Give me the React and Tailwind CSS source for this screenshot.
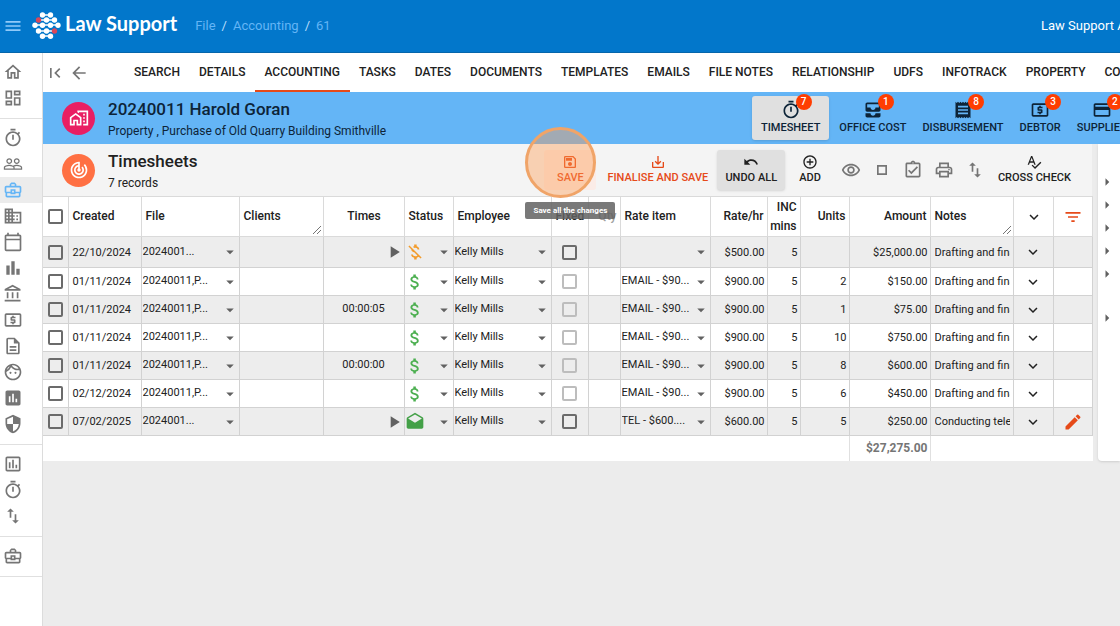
import {
  MdMenu,
  MdOutlineHome,
  MdOutlineDashboard,
  MdOutlineTimer,
  MdPeopleOutline,
  MdOutlineBusinessCenter,
  MdBusiness,
  MdOutlineCalendarToday,
  MdBarChart,
  MdOutlineAccountBalance,
  MdOutlineLocalAtm,
  MdOutlineDescription,
  MdOutlineFace,
  MdAssessment,
  MdSecurity,
  MdOutlineAssessment,
  MdSwapVert,
  MdFirstPage,
  MdArrowBack,
  MdOutlineHomeWork,
  MdTrackChanges,
  MdOutlineSave,
  MdSaveAlt,
  MdUndo,
  MdAddCircleOutline,
  MdOutlineRemoveRedEye,
  MdOutlineStop,
  MdOutlineAssignmentTurnedIn,
  MdOutlinePrint,
  MdSpellcheck,
  MdMoneyOff,
  MdAttachMoney,
  MdDrafts,
  MdFilterList,
  MdModeEdit,
  MdPlayArrow,
  MdArrowDropDown,
  MdArrowRight,
  MdExpandMore,
  MdAllInbox,
  MdReceipt,
  MdPayment,
} from "react-icons/md";

const sideGroups = [
  [
    { label: "Home", icon: MdOutlineHome },
    { label: "Dashboard", icon: MdOutlineDashboard },
  ],
  [
    { label: "Timer", icon: MdOutlineTimer },
    { label: "People", icon: MdPeopleOutline },
    { label: "Files", icon: MdOutlineBusinessCenter, active: true },
    { label: "Companies", icon: MdBusiness },
    { label: "Calendar", icon: MdOutlineCalendarToday },
    { label: "Charts", icon: MdBarChart },
    { label: "Trust account", icon: MdOutlineAccountBalance },
    { label: "Billing", icon: MdOutlineLocalAtm },
    { label: "Documents", icon: MdOutlineDescription },
    { label: "Employees", icon: MdOutlineFace },
    { label: "Reports", icon: MdAssessment },
    { label: "Security", icon: MdSecurity },
  ],
  [
    { label: "Report list", icon: MdOutlineAssessment },
    { label: "Timesheets", icon: MdOutlineTimer },
    { label: "Transfers", icon: MdSwapVert },
  ],
  [{ label: "Recent file", icon: MdOutlineBusinessCenter }],
];

const tabs = [
  "Search",
  "Details",
  "Accounting",
  "Tasks",
  "Dates",
  "Documents",
  "Templates",
  "Emails",
  "File notes",
  "Relationship",
  "UDFs",
  "Infotrack",
  "Property",
  "Costs",
];

const sections = [
  { label: "Timesheet", icon: MdOutlineTimer, count: 7, active: true },
  { label: "Office cost", icon: MdAllInbox, count: 1 },
  { label: "Disbursement", icon: MdReceipt, count: 8 },
  { label: "Debtor", icon: MdOutlineLocalAtm, count: 3 },
  { label: "Supplier", icon: MdPayment, count: 2 },
];

const rows = [
  { created: "22/10/2024", file: "2024001...", play: true, status: "off", editable: true, item: "", rate: "$500.00", units: "", amount: "$25,000.00", notes: "Drafting and finalising" },
  { created: "01/11/2024", file: "20240011,P...", status: "money", item: "EMAIL - $90...", rate: "$900.00", units: "2", amount: "$150.00", notes: "Drafting and finalising" },
  { created: "01/11/2024", file: "20240011,P...", time: "00:00:05", status: "money", item: "EMAIL - $90...", rate: "$900.00", units: "1", amount: "$75.00", notes: "Drafting and finalising" },
  { created: "01/11/2024", file: "20240011,P...", status: "money", item: "EMAIL - $90...", rate: "$900.00", units: "10", amount: "$750.00", notes: "Drafting and finalising" },
  { created: "01/11/2024", file: "20240011,P...", time: "00:00:00", status: "money", item: "EMAIL - $90...", rate: "$900.00", units: "8", amount: "$600.00", notes: "Drafting and finalising" },
  { created: "02/12/2024", file: "20240011,P...", status: "money", item: "EMAIL - $90...", rate: "$900.00", units: "6", amount: "$450.00", notes: "Drafting and finalising" },
  { created: "07/02/2025", file: "2024001...", play: true, status: "sent", editable: true, edit: true, item: "TEL - $600....", rate: "$600.00", units: "5", amount: "$250.00", notes: "Conducting telephone call" },
];

const columnWidths = [
  "w-[25px]",
  "w-[73px]",
  "w-[98px]",
  "w-[84px]",
  "w-[81px]",
  "w-[49px]",
  "w-[98px]",
  "w-[37px]",
  "w-[32px]",
  "w-[90px]",
  "w-[57px]",
  "w-[33px]",
  "w-[49px]",
  "w-[81px]",
  "w-[83px]",
  "w-[40px]",
  "w-[39px]",
];

function Logo() {
  const lines = [
    [10, 18, 3],
    [7, 22, 8],
    [3, 26, 13],
    [7, 22, 19],
    [10, 18, 24],
  ];
  return (
    <svg viewBox="0 0 30 28" className="h-7 w-[30px] shrink-0" aria-hidden="true">
      {lines.map(([x1, x2, y]) => (
        <line key={y} x1={x1} x2={x2} y1={y} y2={y} stroke="white" strokeWidth="1.5" />
      ))}
      <g fill="white">
        <circle cx="10.5" cy="3" r="2.7" />
        <circle cx="18.5" cy="3" r="2.7" />
        <circle cx="14.5" cy="8" r="2.7" />
        <circle cx="22.5" cy="8" r="2.7" />
        <circle cx="3" cy="13.3" r="2.7" />
        <circle cx="10.5" cy="13.3" r="2.7" />
        <circle cx="18.5" cy="13.3" r="2.7" />
        <circle cx="26" cy="13.3" r="2.7" />
        <circle cx="6.5" cy="19" r="2.7" />
        <circle cx="14.5" cy="19" r="2.7" />
        <circle cx="10.5" cy="24.3" r="2.7" />
        <circle cx="18.5" cy="24.3" r="2.7" />
      </g>
      <circle cx="6.5" cy="8" r="2.7" fill="#d9475a" />
      <circle cx="22.5" cy="19" r="2.7" fill="#d9475a" />
    </svg>
  );
}

function TopBar() {
  return (
    <header className="flex h-[53px] shrink-0 items-center border-b border-[#0566ab] bg-[#0277cb] pl-[3px] text-[#64b5f6]">
      <button type="button" aria-label="Menu" className="shrink-0 text-[#90caf9]">
        <MdMenu className="size-5" />
      </button>
      <a href="#home" className="ml-[9px] flex shrink-0 items-center gap-[3px] text-white">
        <Logo />
        <span className="pb-1.5 font-[Lato] text-[20px] leading-6 font-bold">Law Support</span>
      </a>
      <nav className="ml-[18px] flex gap-1.5 text-[13px]">
        <a href="#file">File</a>
        <span className="text-[#bbdefb]">/</span>
        <a href="#accounting">Accounting</a>
        <span className="text-[#bbdefb]">/</span>
        <a href="#61">61</a>
      </nav>
      <div className="ml-auto w-[79px] overflow-hidden text-[13px] whitespace-nowrap text-white">
        Law Support Admin
      </div>
    </header>
  );
}

function SideBar() {
  return (
    <aside className="w-[43px] shrink-0 border-r border-[#dcdcdc] bg-white pt-1.5">
      {sideGroups.map((group, i) => (
        <nav key={i} className="mb-1.5 border-b border-[#e0e0e0] pb-[7px]">
          {group.map(({ label, icon: Icon, active }) => (
            <a
              key={label}
              href="#nav"
              aria-label={label}
              className={`flex h-[26px] items-center pl-[3px] ${
                active ? "bg-[#ececec] text-[#64b5f6]" : "text-[#757575]"
              }`}
            >
              <Icon className="size-5" />
            </a>
          ))}
        </nav>
      ))}
    </aside>
  );
}

function TabBar() {
  return (
    <div className="flex h-[39px] shrink-0 items-center overflow-hidden bg-white">
      <button type="button" aria-label="First" className="ml-0.5 shrink-0 text-[#757575]">
        <MdFirstPage className="size-5" />
      </button>
      <button type="button" aria-label="Back" className="ml-1 shrink-0 text-[#757575]">
        <MdArrowBack className="size-5" />
      </button>
      <nav className="ml-[35px] flex h-full -space-x-px">
        {tabs.map((tab) => (
          <a
            key={tab}
            href="#tab"
            className={`flex items-center border-b-2 px-[10px] text-[12px] font-medium whitespace-nowrap uppercase ${
              tab === "Accounting" ? "border-[#e64a19]" : "border-transparent"
            }`}
          >
            {tab}
          </a>
        ))}
      </nav>
    </div>
  );
}

function FileHeader() {
  return (
    <div className="flex h-[52px] shrink-0 items-center overflow-hidden bg-[#64b5f6] pl-[19px] text-[#0d2438]">
      <span className="flex size-[33px] shrink-0 items-center justify-center rounded-full bg-[#e91e63] text-white">
        <MdOutlineHomeWork className="size-5" />
      </span>
      <div className="ml-[13px] pt-px">
        <h1 className="text-[17px] leading-5 font-medium">20240011 Harold Goran</h1>
        <p className="mt-1 text-[12px] leading-4">Property , Purchase of Old Quarry Building Smithville</p>
      </div>
      <nav className="ml-auto flex w-[368px] shrink-0">
        {sections.map(({ label, icon: Icon, count, active }) => (
          <button
            key={label}
            type="button"
            className={`flex h-11 shrink-0 flex-col items-center justify-center rounded-[3px] text-[11px] leading-4 font-medium uppercase ${
              active ? "mr-[2px] bg-[#e0e0e0] px-[9px] shadow" : "px-2"
            }`}
          >
            <span className="relative">
              <Icon className="size-5" />
              <span className="absolute -top-1.5 left-[15px] flex size-4 items-center justify-center rounded-full bg-[#ff3d00] text-[10px] text-white">
                {count}
              </span>
            </span>
            {label}
          </button>
        ))}
      </nav>
    </div>
  );
}

function ToolButton({ icon: Icon, label, className = "" }) {
  return (
    <button
      type="button"
      className={`flex h-10 shrink-0 flex-col items-center justify-center rounded-[3px] text-[11px] leading-4 font-medium uppercase ${className}`}
    >
      <Icon className="size-4" />
      {label}
    </button>
  );
}

function IconButton({ icon: Icon, label }) {
  return (
    <button type="button" aria-label={label} className="flex w-[31px] shrink-0 justify-center text-[#757575]">
      <Icon className="size-5" />
    </button>
  );
}

function Toolbar() {
  return (
    <div className="flex h-[52px] shrink-0 items-center bg-[#f4f4f4] pl-[19px]">
      <span className="flex size-[33px] shrink-0 items-center justify-center rounded-full bg-[#ff7043] text-white">
        <MdTrackChanges className="size-5" />
      </span>
      <div className="ml-[13px] pt-0.5">
        <h2 className="text-[17px] leading-5 font-medium">Timesheets</h2>
        <p className="mt-1 text-[12px] leading-4">7 records</p>
      </div>
      <div className="ml-auto flex items-center pr-[21px]">
        <div className="relative mr-[11px]">
          <ToolButton icon={MdOutlineSave} label="Save" className="w-[52px] bg-[#fbece7] text-[#e64a19]" />
          <span className="pointer-events-none absolute -top-[23px] -left-[19px] size-[71px] rounded-full border-[3px] border-[#f0a468] bg-[#ff9b50]/40" />
          <span
            role="tooltip"
            className="absolute top-[52px] -left-[19px] z-10 flex h-[17px] w-[90px] items-center justify-center rounded-[2px] bg-[#616161]/85 text-[8px] font-bold whitespace-nowrap text-white"
          >
            Save all the changes
          </span>
        </div>
        <ToolButton icon={MdSaveAlt} label="Finalise and save" className="text-[#e64a19]" />
        <ToolButton icon={MdUndo} label="Undo all" className="ml-[9px] w-[68px] bg-[#e0e0e0] shadow" />
        <ToolButton icon={MdAddCircleOutline} label="Add" className="mr-[15px] ml-[14px]" />
        <IconButton icon={MdOutlineRemoveRedEye} label="View" />
        <IconButton icon={MdOutlineStop} label="Select" />
        <IconButton icon={MdOutlineAssignmentTurnedIn} label="Approve" />
        <IconButton icon={MdOutlinePrint} label="Print" />
        <IconButton icon={MdSwapVert} label="Reorder" />
        <ToolButton icon={MdSpellcheck} label="Cross check" className="ml-[7px]" />
      </div>
    </div>
  );
}

function CheckBox({ label, faded }) {
  return (
    <input
      type="checkbox"
      aria-label={label}
      className={`mx-auto block size-[15px] appearance-none rounded-[2px] border-2 ${
        faded ? "border-[#bdbdbd]" : "border-[#6b6b6b]"
      }`}
    />
  );
}

function DropCell({ children, label }) {
  return (
    <button type="button" aria-label={label} className="flex w-full items-center justify-between text-left">
      <span className="truncate">{children}</span>
      <MdArrowDropDown className="size-[18px] shrink-0 text-[#616161]" />
    </button>
  );
}

function StatusIcon({ status }) {
  if (status === "off") return <MdMoneyOff className="size-5 text-[#f39c2c]" />;
  if (status === "sent") return <MdDrafts className="size-5 text-[#43a047]" />;
  return <MdAttachMoney className="size-5 text-[#4caf50]" />;
}

function ResizeGrip() {
  return (
    <svg viewBox="0 0 8 8" className="absolute right-0.5 bottom-0.5 size-2" stroke="#757575" aria-hidden="true">
      <path d="M0 8 8 0M4 8l4-4" />
    </svg>
  );
}

function TimesheetTable() {
  const head = "border border-[#dadada] pr-[3px] pl-1 py-0 font-medium";
  const cell = "border border-[#d2d2d2] p-0";
  const textCell = "border border-[#d2d2d2] pt-0.5 pr-0.5 pb-0";

  return (
    <table className="w-full table-fixed border-collapse bg-white text-[11px]">
      <colgroup>
        {columnWidths.map((width, i) => (
          <col key={i} className={width} />
        ))}
      </colgroup>
      <thead>
        <tr className="h-10 text-left text-[12px] leading-[19px]">
          <th className="border border-l-0 border-[#dadada] p-0">
            <CheckBox label="Select all" />
          </th>
          <th className={head}>Created</th>
          <th className={head}>File</th>
          <th className={`${head} relative`}>
            Clients
            <ResizeGrip />
          </th>
          <th className={`${head} text-center`}>Times</th>
          <th className={head}>Status</th>
          <th className={head}>Employee</th>
          <th className={head}>Fixed</th>
          <th className={`${head} text-right text-[#9e9e9e]`}>Qty</th>
          <th className={head}>Rate item</th>
          <th className={`${head} text-right`}>Rate/hr</th>
          <th className="border border-[#dadada] py-0 pr-[3px] pl-0 text-right font-medium">INC mins</th>
          <th className={`${head} text-right`}>Units</th>
          <th className={`${head} text-right`}>Amount</th>
          <th className={`${head} relative`}>
            Notes
            <ResizeGrip />
          </th>
          <th className={head}>
            <button type="button" aria-label="Expand all" className="mx-auto block">
              <MdExpandMore className="size-[18px]" />
            </button>
          </th>
          <th className={head}>
            <button type="button" aria-label="Filter" className="mx-auto block text-[#e64a19]">
              <MdFilterList className="size-5" />
            </button>
          </th>
        </tr>
      </thead>
      <tbody>
        {rows.map((row, i) => (
          <tr key={i} className={`${i === 0 ? "h-[31px]" : "h-7"} ${i % 2 === 0 ? "bg-[#ededed]" : "bg-white"}`}>
            <td className={`${cell} border-l-0`}>
              <CheckBox label={`Select row ${i + 1}`} />
            </td>
            <td className={`${textCell} pl-1`}>{row.created}</td>
            <td className={`${cell} pl-px`}>
              <DropCell label="File">{row.file}</DropCell>
            </td>
            <td className={cell} />
            <td className={`${cell} text-center`}>
              {row.play ? (
                <button type="button" aria-label="Start timer" className="ml-auto block text-[#616161]">
                  <MdPlayArrow className="size-5" />
                </button>
              ) : (
                row.time
              )}
            </td>
            <td className={cell}>
              <DropCell label="Status">
                <StatusIcon status={row.status} />
              </DropCell>
            </td>
            <td className={`${cell} pl-px`}>
              <DropCell label="Employee">Kelly Mills</DropCell>
            </td>
            <td className={cell}>
              <CheckBox label="Fixed" faded={!row.editable} />
            </td>
            <td className={cell} />
            <td className={`${cell} pl-px`}>
              <DropCell label="Rate item">{row.item}</DropCell>
            </td>
            <td className={`${textCell} text-right`}>{row.rate}</td>
            <td className={`${textCell} text-right`}>5</td>
            <td className={`${textCell} text-right`}>{row.units}</td>
            <td className={`${textCell} text-right`}>{row.amount}</td>
            <td className={`${textCell} pl-1`}>
              <div className="mr-px overflow-hidden whitespace-nowrap">{row.notes}</div>
            </td>
            <td className={cell}>
              <button type="button" aria-label="Expand" className="mx-auto block">
                <MdExpandMore className="size-[18px]" />
              </button>
            </td>
            <td className={cell}>
              {row.edit && (
                <button type="button" aria-label="Edit" className="mx-auto block text-[#e64a19]">
                  <MdModeEdit className="size-5" />
                </button>
              )}
            </td>
          </tr>
        ))}
      </tbody>
      <tfoot>
        <tr className="h-[25px] text-[12px]">
          <td colSpan={13} />
          <td className="border-x border-[#e0e0e0] pr-0.5 text-right font-bold text-[#757575]">$27,275.00</td>
          <td colSpan={3} />
        </tr>
      </tfoot>
    </table>
  );
}

function SidePanel() {
  return (
    <aside className="ml-1.5 flex h-[317px] flex-1 flex-col rounded-bl bg-white pt-[26px] text-[#616161] shadow">
      {[0, 1, 2, 3, 4].map((n) => (
        <button key={n} type="button" aria-label="Expand section" className="flex h-[23px] items-center">
          <MdArrowRight className="size-[18px]" />
        </button>
      ))}
      <button type="button" aria-label="Expand last section" className="mt-[21px] flex h-[23px] items-center">
        <MdArrowRight className="size-[18px]" />
      </button>
    </aside>
  );
}

export default function App() {
  return (
    <div className="flex h-screen flex-col overflow-hidden bg-[#ececec] font-[Roboto,sans-serif] text-[#212121]">
      <TopBar />
      <div className="flex min-h-0 flex-1">
        <SideBar />
        <main className="flex min-w-0 flex-1 flex-col">
          <TabBar />
          <FileHeader />
          <div className="flex min-h-0 flex-1">
            <div className="min-w-0 flex-1">
              <Toolbar />
              <TimesheetTable />
            </div>
            <div className="flex w-7 shrink-0">
              <SidePanel />
            </div>
          </div>
        </main>
      </div>
    </div>
  );
}
